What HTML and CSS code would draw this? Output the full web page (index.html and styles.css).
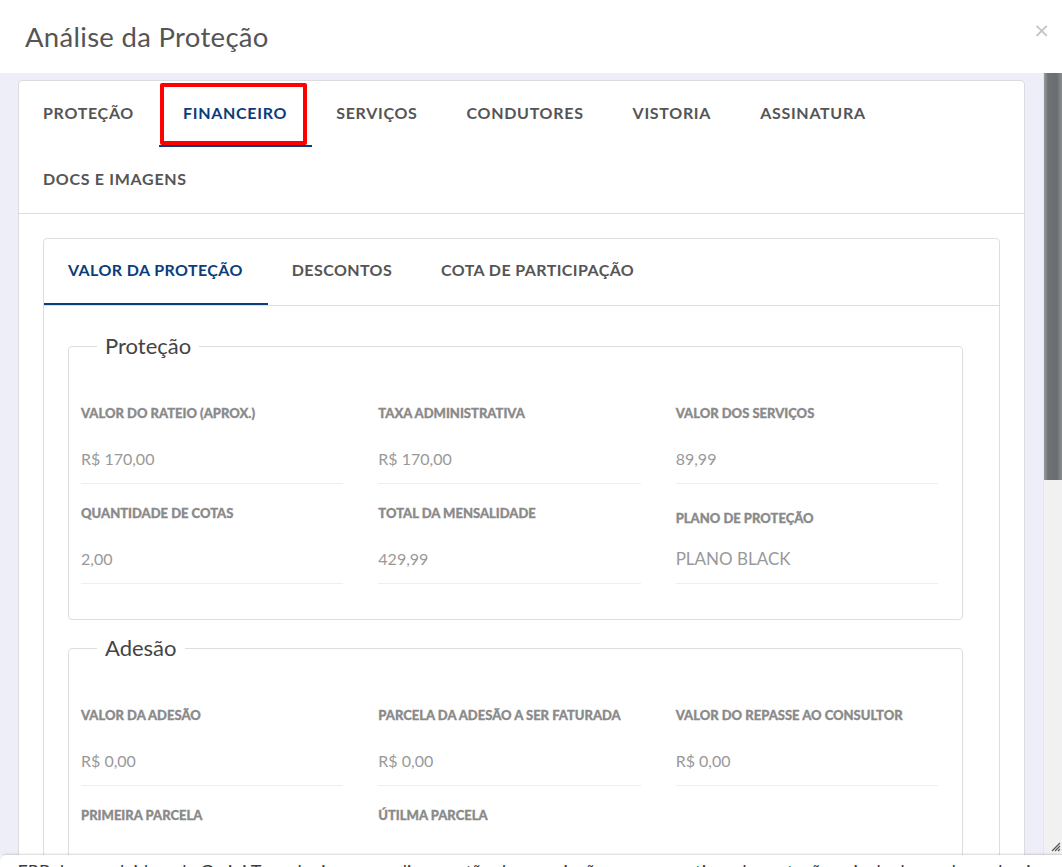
FILE: index.html
```html
<!DOCTYPE html>
<html lang="pt-BR">
<head>
<meta charset="utf-8">
<title>Análise da Proteção</title>
<link rel="stylesheet" href="styles.css">
</head>
<body>
<div class="modal">
  <header class="modal-header">
    <h2 class="modal-title">Análise da Proteção</h2>
    <button class="close" type="button">×</button>
  </header>

  <div class="modal-main">
    <div class="modal-body">
      <section class="card">
        <nav class="tabs">
          <a class="tab">PROTEÇÃO</a>
          <a class="tab active">FINANCEIRO<span class="highlight"></span></a>
          <a class="tab">SERVIÇOS</a>
          <a class="tab">CONDUTORES</a>
          <a class="tab">VISTORIA</a>
          <a class="tab">ASSINATURA</a>
          <a class="tab">DOCS E IMAGENS</a>
        </nav>

        <div class="card-body">
          <section class="card inner">
            <nav class="subtabs">
              <a class="subtab active">VALOR DA PROTEÇÃO</a>
              <a class="subtab">DESCONTOS</a>
              <a class="subtab">COTA DE PARTICIPAÇÃO</a>
            </nav>

            <div class="inner-body">
              <fieldset class="group">
                <legend>Proteção</legend>
                <div class="fields">
                  <div class="field"><div class="label">VALOR DO RATEIO (APROX.)</div><div class="value">R$ 170,00</div></div>
                  <div class="field"><div class="label">TAXA ADMINISTRATIVA</div><div class="value">R$ 170,00</div></div>
                  <div class="field"><div class="label">VALOR DOS SERVIÇOS</div><div class="value">89,99</div></div>
                  <div class="field"><div class="label">QUANTIDADE DE COTAS</div><div class="value">2,00</div></div>
                  <div class="field"><div class="label">TOTAL DA MENSALIDADE</div><div class="value">429,99</div></div>
                  <div class="field select"><div class="label">PLANO DE PROTEÇÃO</div><div class="value">PLANO BLACK</div></div>
                </div>
              </fieldset>

              <fieldset class="group">
                <legend>Adesão</legend>
                <div class="fields">
                  <div class="field"><div class="label">VALOR DA ADESÃO</div><div class="value">R$ 0,00</div></div>
                  <div class="field"><div class="label">PARCELA DA ADESÃO A SER FATURADA</div><div class="value">R$ 0,00</div></div>
                  <div class="field"><div class="label">VALOR DO REPASSE AO CONSULTOR</div><div class="value">R$ 0,00</div></div>
                  <div class="field"><div class="label">PRIMEIRA PARCELA</div><div class="value">/ /</div></div>
                  <div class="field"><div class="label">ÚTILMA PARCELA</div><div class="value">/ /</div></div>
                </div>
              </fieldset>
            </div>
          </section>
        </div>
      </section>
    </div>

    <div class="scrollbar">
      <div class="thumb"></div>
      <svg class="grip" width="10" height="10" viewBox="0 0 10 10">
        <path d="M9 1L1 9M9 4L4 9M9 7L7 9" stroke="#555" stroke-width="1.2"/>
      </svg>
    </div>
  </div>

  <div class="page-strip">um ERP desenvolvido pela Gmini Tecnologia para realizar gestão de associações e cooperativas de proteção veicular baseada em business</div>
</div>
</body>
</html>
```

FILE: styles.css
```css
* { box-sizing: border-box; }

html, body {
  margin: 0;
  height: 100%;
  overflow: hidden;
  background: #fff;
  font-family: "Lato", "Open Sans", sans-serif;
}

.modal {
  display: flex;
  flex-direction: column;
  height: 867px;
}

/* header */
.modal-header {
  height: 73px;
  flex: none;
  display: flex;
  align-items: center;
  justify-content: space-between;
  padding: 0 12px 0 25px;
  background: #fff;
}
.modal-title {
  margin: 0;
  font-size: 27.5px;
  font-weight: 400;
  color: #555;
  letter-spacing: 0.3px;
}
.close {
  border: 0;
  background: none;
  padding: 0;
  font-size: 20px;
  line-height: 1;
  color: #c4c4c4;
  font-family: "DejaVu Sans", sans-serif;
  margin-top: -14px;
}

/* scrolling area */
.modal-main {
  height: 782px;
  flex: none;
  display: flex;
  background: #eeeef8;
  overflow: hidden;
}
.modal-body {
  flex: 1;
  padding: 7px 18px 0 18px;
  overflow: hidden;
}
.scrollbar {
  width: 19px;
  flex: none;
  background: #f1f1f1;
  border-left: 1px solid #e6e6e6;
  display: flex;
  flex-direction: column;
  align-items: flex-end;
}
.thumb {
  width: 100%;
  height: 407px;
  background: linear-gradient(90deg, #9a9da0 0%, #6f7376 22%, #696d70 70%, #8b8e91 100%);
}
.grip { margin-top: auto; margin-bottom: 3px; margin-right: 1px; }

/* cards */
.card {
  background: #fff;
  border: 1px solid #dcdce0;
  border-radius: 4px;
  min-height: 900px;
}
.card.inner { min-height: 700px; border-color: #dedede; }

.tabs {
  display: flex;
  flex-wrap: wrap;
  border-bottom: 1px solid #dedede;
}
.tab {
  position: relative;
  height: 66px;
  display: flex;
  align-items: center;
  padding: 0 25px 2px 24px;
  font-size: 16px;
  font-weight: 700;
  letter-spacing: 0.7px;
  color: #555;
  border-bottom: 2px solid transparent;
}
.tab.active {
  color: #0b3d7a;
  border-bottom-color: #0b3d7a;
}
.highlight {
  position: absolute;
  left: 1px;
  top: 2px;
  width: 147px;
  height: 62px;
  border: 4px solid #ff0000;
  border-radius: 2px;
}

.card-body { padding: 24px; }

.subtabs {
  display: flex;
  border-bottom: 1px solid #dedede;
}
.subtab {
  height: 66px;
  display: flex;
  align-items: center;
  padding: 0 25px 3px 24px;
  font-size: 16px;
  font-weight: 700;
  letter-spacing: 0.4px;
  color: #555;
  border-bottom: 2px solid transparent;
}
.subtab.active {
  color: #0b3d7a;
  border-bottom-color: #0b3d7a;
}

.inner-body { padding: 27px 36px 0 24px; }

/* field groups */
.group {
  margin: 0 0 15px;
  padding: 0 24px 35px 12px;
  border: 1px solid #dedede;
  border-radius: 4px;
}
.group legend {
  margin-left: 16px;
  padding: 0 8px;
  font-size: 22px;
  line-height: 26px;
  color: #444;
}
.fields {
  margin-top: 25px;
  display: grid;
  grid-template-columns: repeat(3, 1fr);
  column-gap: 35px;
}
.field {
  padding: 19px 0 12px;
  border-bottom: 1px solid #efefef;
}
.label {
  font-size: 13px;
  line-height: 20px;
  font-weight: 900;
  color: #8a8a8a;
  -webkit-text-stroke: 0.3px #8a8a8a;
  white-space: nowrap;
}
.value {
  margin-top: 24px;
  font-size: 16px;
  line-height: 24px;
  color: #999;
}
.field.select .label { margin-top: 5px; }
.field.select .value { margin-top: 19px; font-size: 17px; color: #999; }

/* page text showing below the dialog */
.page-strip {
  height: 12px;
  flex: none;
  overflow: hidden;
  background: #fff;
  border-top-left-radius: 6px;
  padding-top: 7px;
  font-size: 18px;
  line-height: 18px;
  color: #3c3c3c;
  white-space: nowrap;
  text-indent: -12px;
  box-shadow: 0 -1px 2px rgba(0,0,0,0.15);
}
```
